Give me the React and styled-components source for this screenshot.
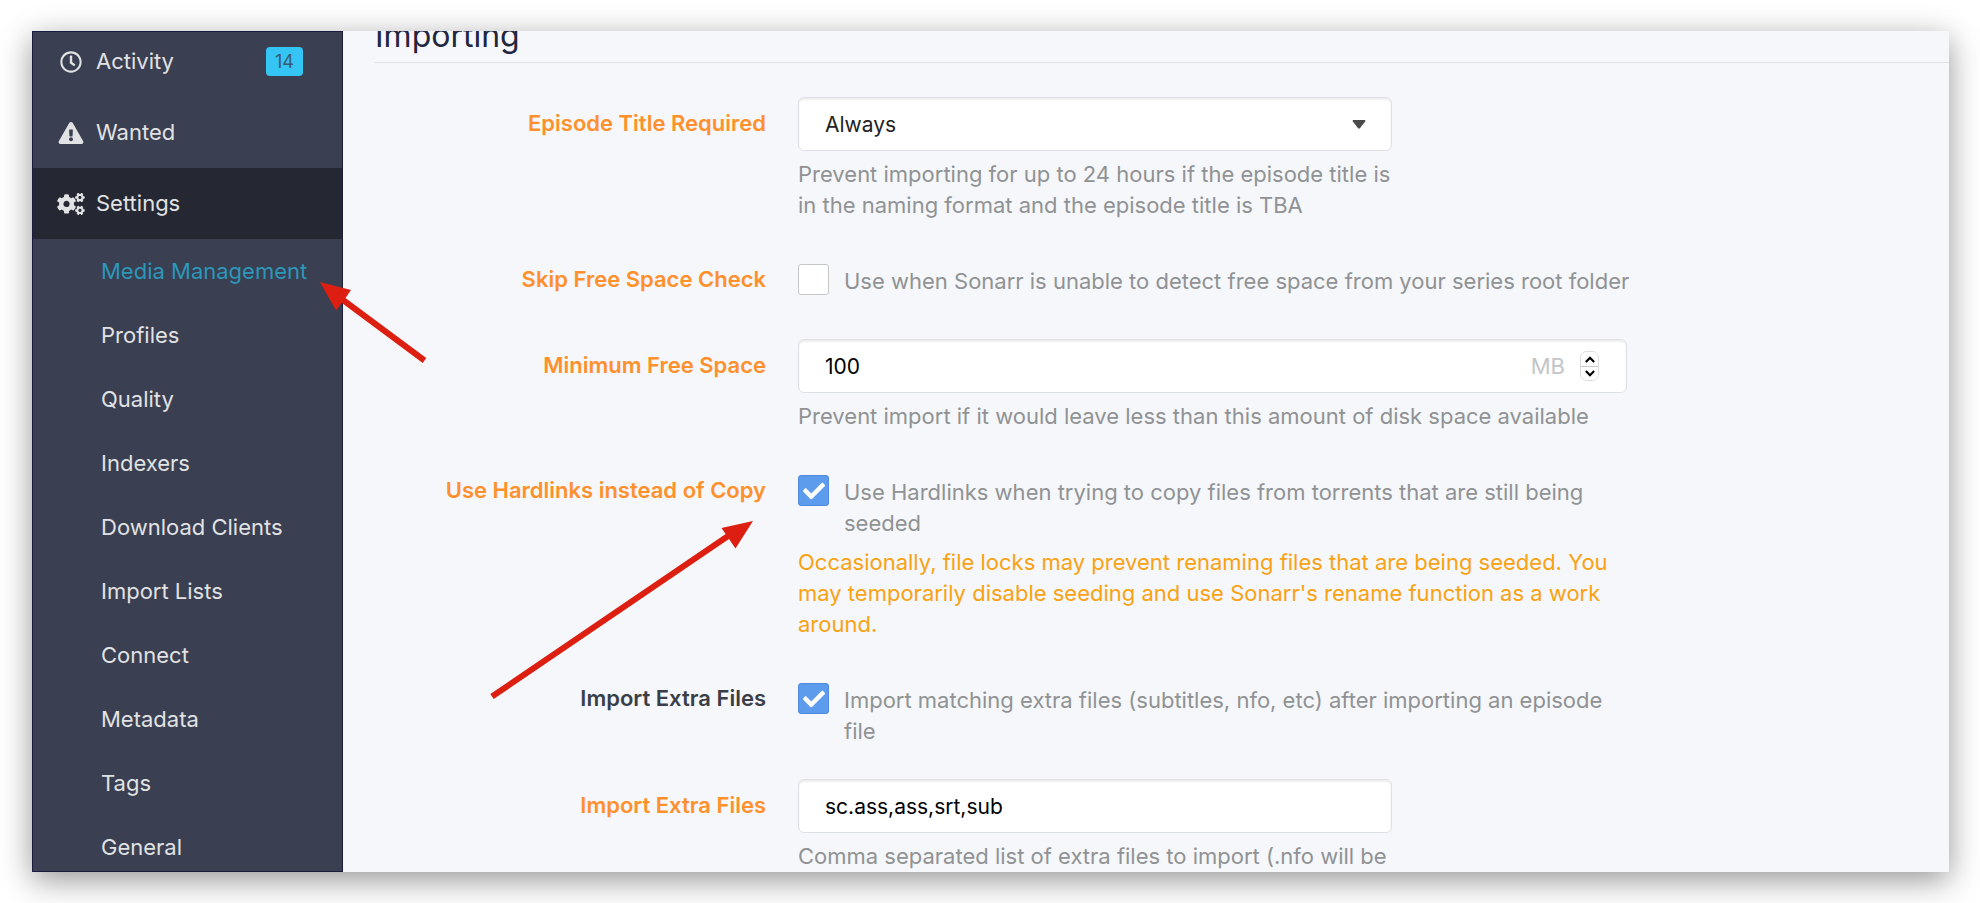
import React from "react";
import styled, { createGlobalStyle } from "styled-components";
import { FaRegClock, FaExclamationTriangle, FaCogs, FaCheck } from "react-icons/fa";

const GlobalStyle = createGlobalStyle`
  *, *::before, *::after { box-sizing: border-box; }
  body {
    margin: 0;
    background: #fff;
    font-family: Inter, "Liberation Sans", sans-serif;
    font-size: 22px;
    line-height: 31px;
  }
  input, select, button { font: inherit; }
`;

const Page = styled.div`
  display: flex;
  height: 100vh;
  padding: 31px 31px 31px 32px;
`;

const Window = styled.div`
  position: relative;
  display: flex;
  flex: 1;
  min-width: 0;
  overflow: hidden;
  background: #f5f7fb;
`;

const Shadow = styled.div`
  display: flex;
  flex: 1;
  min-width: 0;
  box-shadow: 0 8px 30px rgba(0, 0, 0, 0.42);
`;

const Sidebar = styled.nav`
  flex: 0 0 311px;
  overflow: hidden;
  border: 1px solid #191c3c;
  background: #3a3f51;
`;

const NavList = styled.ul`
  margin: -6px 0 0;
  padding: 0;
  list-style: none;
`;

const NavLink = styled.a`
  display: flex;
  align-items: center;
  gap: 11px;
  height: 71px;
  padding: 0 39px 0 24px;
  background: ${(p) => (p.$active ? "#252833" : "transparent")};
  color: #e1e2e3;
  text-decoration: none;
`;

const NavIcon = styled.span`
  display: flex;
  justify-content: center;
  flex: 0 0 28px;

  svg {
    flex: none;
    width: 28px;
    height: 22px;
  }
`;

const Badge = styled.span`
  margin-left: auto;
  padding: 0 9px;
  border-radius: 4px;
  background: #35c5f4;
  color: #3a5a73;
  font-size: 18px;
  line-height: 29px;
`;

const SubList = styled.ul`
  margin: 0;
  padding: 0;
  list-style: none;
`;

const SubLink = styled.a`
  display: block;
  padding: 0 24px 0 68px;
  color: ${(p) => (p.$active ? "#2b97b9" : "#e1e2e3")};
  line-height: 64px;
  text-decoration: none;
`;

const Content = styled.main`
  flex: 1;
  min-width: 0;
  overflow: hidden;
  padding-left: 32px;
`;

/* The pane is scrolled a little way into the section. */
const Section = styled.section`
  margin-top: -15px;
`;

const Heading = styled.h2`
  margin: 0 0 34px;
  padding-bottom: 7px;
  border-bottom: 1px solid #dee1e6;
  color: #23263f;
  font-size: 32px;
  font-weight: 400;
  line-height: 39px;
`;

const Form = styled.form`
  display: flex;
  flex-direction: column;
  gap: 32px;
`;

const Group = styled.div`
  display: flex;
  gap: 32px;
  min-height: 54px;
`;

const Label = styled.label`
  flex: 0 0 391px;
  color: ${(p) => (p.$advanced ? "#ff902b" : "#3a3f47")};
  font-weight: 600;
  line-height: 52px;
  text-align: right;
`;

const fieldWidths = { small: "594px", large: "829px", check: "834px" };

const Field = styled.div`
  flex: 0 1 ${(p) => fieldWidths[p.$size]};
  min-width: 0;
`;

const Control = styled.div`
  position: relative;
  display: flex;
  align-items: center;
`;

const TextInput = styled.input`
  width: 100%;
  height: 54px;
  padding: 0 26px;
  border: 1px solid #dbe1e6;
  border-radius: 6px;
  background: #fff;
  box-shadow: inset 0 2px 2px rgba(0, 0, 0, 0.07);
  color: #000;
  appearance: textfield;

  && { font-size: 21px; }
  &::-webkit-inner-spin-button { appearance: none; }
`;

const Select = styled(TextInput).attrs({ as: "select" })`
  appearance: none;
  color: #222;
`;

const Caret = styled.svg`
  position: absolute;
  right: 26px;
  width: 14px;
  height: 9px;
  fill: #4a4a4c;
  pointer-events: none;
`;

const NumberTools = styled.div`
  position: absolute;
  right: 28px;
  display: flex;
  align-items: center;
  gap: 15px;
`;

const Unit = styled.span`
  color: #c3c5c7;
`;

const Spinner = styled.div`
  display: flex;
  flex-direction: column;
  overflow: hidden;
  width: 19px;
  border: 1px solid #dcdcdc;
  border-radius: 7px;
`;

const SpinButton = styled.button`
  display: flex;
  align-items: center;
  justify-content: center;
  height: 14px;
  padding: 0;
  border: 0;
  background: #fff;

  & + & { border-top: 1px solid #c9c9c9; }

  svg {
    width: 10px;
    height: 7px;
    fill: none;
    stroke: #000;
    stroke-width: 2;
  }
`;

const CheckRow = styled.div`
  display: flex;
  gap: 15px;
  padding-top: 11px;
`;

const CheckBox = styled.span`
  display: grid;
  flex: none;
  place-items: center;
  width: 31px;
  height: 31px;

  > * { grid-area: 1 / 1; }

  input {
    width: 100%;
    height: 100%;
    margin: 0;
    border: 1px solid #c4c6c8;
    border-radius: 3px;
    background: #fff;
    appearance: none;
  }

  input:checked {
    border-color: #5089de;
    background: #5d9cec;
  }

  svg {
    width: 22px;
    height: 22px;
    color: #fff;
    pointer-events: none;
  }
`;

const CheckText = styled.span`
  padding-top: 2px;
  color: #909293;
`;

const Help = styled.p`
  margin: 8px 0 0;
  color: ${(p) => (p.$warning ? "#f9a213" : "#909293")};
`;

const Arrow = styled.svg`
  position: absolute;
  left: ${(p) => p.$left}px;
  top: ${(p) => p.$top}px;
  pointer-events: none;
  fill: #dc1f10;
  stroke: #dc1f10;
`;

const navItems = [
  { name: "Activity", Icon: FaRegClock, badge: 14 },
  { name: "Wanted", Icon: FaExclamationTriangle },
  { name: "Settings", Icon: FaCogs, active: true },
];

const settingsPages = [
  "Media Management", "Profiles", "Quality", "Indexers", "Download Clients",
  "Import Lists", "Connect", "Metadata", "Tags", "General",
];

function CheckField({ id, checked, text, children }) {
  return (
    <Field $size="check">
      <CheckRow>
        <CheckBox>
          <input id={id} type="checkbox" defaultChecked={checked} aria-describedby={`${id}-text`} />
          {checked && <FaCheck />}
        </CheckBox>
        <CheckText id={`${id}-text`}>{text}</CheckText>
      </CheckRow>
      {children}
    </Field>
  );
}

export default function App() {
  return (
    <Page>
      <GlobalStyle />
      <Shadow>
        <Window>
          <Sidebar>
            <NavList>
              {navItems.map(({ name, Icon, badge, active }) => (
                <li key={name}>
                  <NavLink href="#" $active={active}>
                    <NavIcon><Icon /></NavIcon>
                    {name}
                    {badge && <Badge>{badge}</Badge>}
                  </NavLink>
                </li>
              ))}
            </NavList>
            <SubList>
              {settingsPages.map((name, i) => (
                <li key={name}><SubLink href="#" $active={i === 0}>{name}</SubLink></li>
              ))}
            </SubList>
          </Sidebar>

          <Content>
            <Section>
              <Heading>Importing</Heading>
              <Form>
                <Group>
                  <Label htmlFor="title" $advanced>Episode Title Required</Label>
                  <Field $size="small">
                    <Control>
                      <Select id="title"><option>Always</option></Select>
                      <Caret viewBox="0 0 12 8"><path d="M1 0h10q1 .4.5 1.3L6.8 7.4q-.8.8-1.6 0L.5 1.3Q0 .4 1 0z" /></Caret>
                    </Control>
                    <Help>Prevent importing for up to 24 hours if the episode title is in the naming format and the episode title is TBA</Help>
                  </Field>
                </Group>

                <Group>
                  <Label htmlFor="skip" $advanced>Skip Free Space Check</Label>
                  <CheckField id="skip" text="Use when Sonarr is unable to detect free space from your series root folder" />
                </Group>

                <Group>
                  <Label htmlFor="space" $advanced>Minimum Free Space</Label>
                  <Field $size="large">
                    <Control>
                      <TextInput id="space" type="number" defaultValue="100" />
                      <NumberTools>
                        <Unit>MB</Unit>
                        <Spinner>
                          <SpinButton type="button" aria-label="Increase"><svg viewBox="0 0 9 6"><path d="M.8 5.2 4.5 1.5 8.2 5.2" /></svg></SpinButton>
                          <SpinButton type="button" aria-label="Decrease"><svg viewBox="0 0 9 6"><path d="M.8.8 4.5 4.5 8.2.8" /></svg></SpinButton>
                        </Spinner>
                      </NumberTools>
                    </Control>
                    <Help>Prevent import if it would leave less than this amount of disk space available</Help>
                  </Field>
                </Group>

                <Group>
                  <Label htmlFor="hardlinks" $advanced>Use Hardlinks instead of Copy</Label>
                  <CheckField id="hardlinks" checked text="Use Hardlinks when trying to copy files from torrents that are still being seeded">
                    <Help $warning>Occasionally, file locks may prevent renaming files that are being seeded. You may temporarily disable seeding and use Sonarr's rename function as a work around.</Help>
                  </CheckField>
                </Group>

                <Group>
                  <Label htmlFor="extra">Import Extra Files</Label>
                  <CheckField id="extra" checked text="Import matching extra files (subtitles, nfo, etc) after importing an episode file" />
                </Group>

                <Group>
                  <Label htmlFor="extensions" $advanced>Import Extra Files</Label>
                  <Field $size="small">
                    <Control>
                      <TextInput id="extensions" type="text" defaultValue="sc.ass,ass,srt,sub" />
                    </Control>
                    <Help>Comma separated list of extra files to import (.nfo will be</Help>
                  </Field>
                </Group>
              </Form>
            </Section>
          </Content>

          <Arrow $left={287} $top={250} width="108" height="84" viewBox="0 0 108 84">
            <path d="M24 19 105.500 79.500" strokeWidth="6" />
            <path d="M.8 1 32 9 26.500 17 22 23 17 29.500z" stroke="none" />
          </Arrow>
          <Arrow $left={457} $top={488} width="266" height="182" viewBox="0 0 266 182">
            <path d="M3 177.500 242 15" strokeWidth="6" />
            <path d="M264 2 232.500 9 246.500 29.500z" stroke="none" />
          </Arrow>
        </Window>
      </Shadow>
    </Page>
  );
}
